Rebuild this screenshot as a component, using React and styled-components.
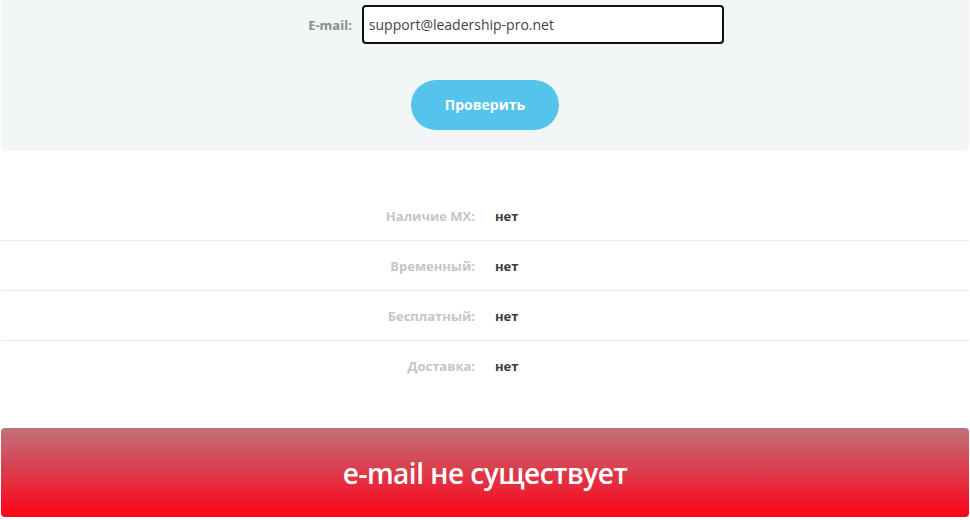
import React from 'react';
import styled, { createGlobalStyle } from 'styled-components';

const GlobalStyle = createGlobalStyle`
  body {
    margin: 0;
    background: #ffffff;
    font-family: 'Open Sans', 'Liberation Sans', sans-serif;
  }
`;

const Page = styled.div`
  width: 968px;
  margin: 0 1px;
`;

// Form panel
const Panel = styled.div`
  background: #f2f6f7;
  border-radius: 0 0 6px 6px;
  padding: 5px 0 21px;
  display: flex;
  flex-direction: column;
  align-items: center;
`;

const Field = styled.div`
  display: flex;
  align-items: center;
  gap: 10px;
  margin-left: 62px;
`;

const FieldLabel = styled.label`
  font-size: 13px;
  font-weight: 700;
  color: #8c8c8c;
`;

const Input = styled.input`
  box-sizing: border-box;
  width: 362px;
  height: 39px;
  border: 2px solid #111;
  border-radius: 4px;
  padding: 0 5px;
  font-family: 'Open Sans', 'Liberation Sans', sans-serif;
  font-size: 14px;
  color: #444;
  outline: none;
  background: #fff;
`;

const CheckButton = styled.button`
  margin-top: 36px;
  width: 148px;
  height: 50px;
  border: none;
  border-radius: 25px;
  background: #55c4ec;
  color: #fff;
  font-family: 'Open Sans', 'Liberation Sans', sans-serif;
  font-size: 14px;
  font-weight: 700;
  padding-bottom: 2px;
  cursor: pointer;
`;

// Results
const Results = styled.div`
  margin-top: 40px;
`;

const Row = styled.div`
  display: grid;
  grid-template-columns: 474px 1fr;
  column-gap: 20px;
  align-items: center;
  height: 49px;
  border-bottom: 1px solid ${(p) => (p.last ? 'transparent' : '#e9ebec')};
  font-size: 13px;
  font-weight: 700;
`;

const RowLabel = styled.span`
  text-align: right;
  color: #c3c6ca;
`;

const RowValue = styled.span`
  color: #3a3d40;
`;

const Banner = styled.div`
  margin-top: 37px;
  height: 89px;
  border-radius: 4px;
  background: linear-gradient(180deg, #c0727b 0%, #dc3a4a 50%, #ff0318 100%);
  display: flex;
  align-items: center;
  justify-content: center;
  color: #fff;
  font-size: 28px;
  font-weight: 600;
  letter-spacing: -0.5px;
`;

const rows = [
  { label: 'Наличие MX:', value: 'нет' },
  { label: 'Временный:', value: 'нет' },
  { label: 'Бесплатный:', value: 'нет' },
  { label: 'Доставка:', value: 'нет' },
];

const App = () => (
  <>
    <GlobalStyle />
    <Page>
      <Panel>
        <Field>
          <FieldLabel>E-mail:</FieldLabel>
          <Input defaultValue="support@leadership-pro.net" />
        </Field>
        <CheckButton>Проверить</CheckButton>
      </Panel>
      <Results>
        {rows.map((r, i) => (
          <Row key={r.label} last={i === rows.length - 1}>
            <RowLabel>{r.label}</RowLabel>
            <RowValue>{r.value}</RowValue>
          </Row>
        ))}
      </Results>
      <Banner>e-mail не существует</Banner>
    </Page>
  </>
);

export default App;
